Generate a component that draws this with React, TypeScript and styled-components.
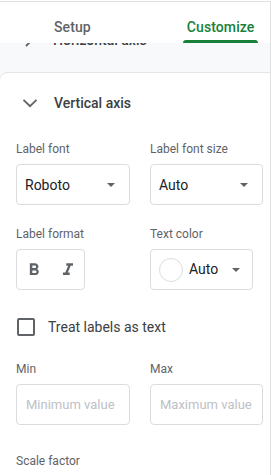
import React from "react";
import styled, { createGlobalStyle } from "styled-components";

const Global = createGlobalStyle`
  html, body { margin: 0; padding: 0; background: #ffffff; }
  body { font-family: Roboto, "Noto Sans", Arial, sans-serif; -webkit-font-smoothing: antialiased; }
  * { box-sizing: border-box; }
`;

const Page = styled.div`
  width: 271px;
  height: 475px;
  overflow: hidden;
  margin-top: 1px;
  border-top: 1px solid #e0e0e0;
  border-right: 1px solid #e0e0e0;
  background: #ffffff;
  display: flex;
  flex-direction: column;
`;

const TabBar = styled.div`
  display: flex;
  align-items: flex-end;
  height: 41px;
  padding-left: 50px;
  gap: 88px;
  background: #ffffff;
  position: relative;
  z-index: 1;
`;

const Tab = styled.div<{ $active?: boolean }>`
  position: relative;
  padding: 0 4px 6px;
  font-size: 14px;
  line-height: 20px;
  font-weight: 500;
  letter-spacing: 0.1px;
  color: ${(p) => (p.$active ? "#188038" : "#5f6368")};
  &::after {
    content: "";
    position: absolute;
    left: 0;
    right: 0;
    bottom: 0;
    height: 3px;
    border-radius: 3px 3px 0 0;
    background: ${(p) => (p.$active ? "#188038" : "transparent")};
  }
`;

const Scroller = styled.div`
  flex: 1;
  background: #f8f9fa;
  display: flex;
  flex-direction: column;
  overflow: hidden;
`;

const CollapsedPeek = styled.div`
  height: 29px;
  overflow: hidden;
`;

const SectionHeader = styled.div<{ $peek?: boolean }>`
  display: flex;
  align-items: center;
  gap: 16px;
  height: 20px;
  padding-left: ${(p) => (p.$peek ? "21px" : "6px")};
  margin-top: ${(p) => (p.$peek ? "-13px" : "0")};
  font-size: 14px;
  line-height: 20px;
  font-weight: 500;
  color: #3c4043;
`;

const Card = styled.div`
  flex: 1;
  background: #ffffff;
  border-top: 1px solid #e3e5e8;
  border-top-left-radius: 8px;
  box-shadow: -1px 0 0 0 #f1f3f4;
  padding: 20px 8px 0 16px;
  display: flex;
  flex-direction: column;
`;

const Grid = styled.div`
  display: grid;
  grid-template-columns: 114px 113px;
  column-gap: 20px;
`;

const Field = styled.div<{ $top: number }>`
  display: flex;
  flex-direction: column;
  margin-top: ${(p) => p.$top}px;
`;

const Label = styled.div`
  font-size: 12px;
  line-height: 16px;
  color: #5f6368;
  margin-bottom: 7px;
  white-space: nowrap;
`;

const Box = styled.div<{ $w?: number }>`
  height: 41px;
  width: ${(p) => (p.$w ? `${p.$w}px` : "auto")};
  border: 1px solid #dadce0;
  border-radius: 4px;
  background: #ffffff;
  display: flex;
  align-items: center;
`;

const SelectBox = styled(Box)`
  justify-content: space-between;
  padding: 0 14px 0 8px;
  font-size: 14px;
  color: #202124;
`;

const ColorBox = styled(Box)`
  padding: 0 12px 0 8px;
  gap: 6px;
  font-size: 14px;
  color: #202124;
`;

const Swatch = styled.span`
  width: 24px;
  height: 24px;
  border-radius: 50%;
  border: 1px solid #dadce0;
  background: #ffffff;
  flex: none;
`;

const ColorText = styled.span`
  flex: 1;
  margin-top: -1px;
`;

const FormatBox = styled(Box)`
  padding: 1px 0 0 7px;
  gap: 14px;
  color: #5f6368;
`;

const Input = styled.input`
  height: 41px;
  width: 100%;
  border: 1px solid #dadce0;
  border-radius: 4px;
  background: #ffffff;
  padding: 0 6px 0 9px;
  font-family: Roboto, "Noto Sans", Arial, sans-serif;
  font-size: 13px;
  color: #202124;
  outline: none;
  &::placeholder {
    color: #bdc1c6;
  }
`;

const CheckRow = styled.label`
  display: flex;
  align-items: center;
  gap: 13px;
  margin-top: 27px;
  padding-left: 1px;
  font-size: 14px;
  line-height: 20px;
  color: #3c4043;
`;

const CheckSquare = styled.span`
  width: 18px;
  height: 18px;
  border: 2px solid #5f6368;
  border-radius: 2px;
  flex: none;
`;

const Caret = () => (
  <svg width="8" height="4" viewBox="0 0 10 5" style={{ flex: "none" }}>
    <path d="M0 0L5 5L10 0z" fill="#5f6368" />
  </svg>
);

const ChevronDown = () => (
  <svg width="16" height="10" viewBox="0 0 16 10" style={{ flex: "none" }}>
    <path d="M1.5 1.8L8 8.2L14.5 1.8" fill="none" stroke="#5f6368" strokeWidth="1.8" />
  </svg>
);

const ChevronRight = () => (
  <svg width="16" height="16" viewBox="0 0 16 16" style={{ flex: "none" }}>
    <path d="M5 2L11 8L5 14" fill="none" stroke="#5f6368" strokeWidth="1.8" />
  </svg>
);

const BoldIcon = () => (
  <svg width="20" height="20" viewBox="0 0 24 24">
    <path
      fill="#5f6368"
      d="M15.6 10.79c.97-.67 1.65-1.77 1.65-2.79 0-2.26-1.750-4-4-4H7v14h7.04c2.09 0 3.71-1.7 3.71-3.79 0-1.52-.86-2.82-2.150-3.420zM10 6.5h3c.83 0 1.5.67 1.5 1.5s-.67 1.5-1.5 1.5h-3v-3zm3.5 9H10v-3h3.5c.83 0 1.5.67 1.5 1.5s-.67 1.5-1.5 1.5z"
    />
  </svg>
);

const ItalicIcon = () => (
  <svg width="20" height="20" viewBox="0 0 24 24">
    <path fill="#5f6368" d="M10 4v3h2.21l-3.42 8H6v3h8v-3h-2.21l3.42-8H18V4z" />
  </svg>
);

export default function App() {
  return (
    <>
      <Global />
      <Page>
        <TabBar>
          <Tab>Setup</Tab>
          <Tab $active>Customize</Tab>
        </TabBar>
        <Scroller>
          <CollapsedPeek>
            <SectionHeader $peek>
              <ChevronRight />
              Horizontal axis
            </SectionHeader>
          </CollapsedPeek>
          <Card>
            <SectionHeader>
              <ChevronDown />
              Vertical axis
            </SectionHeader>
            <Grid>
              <Field $top={28}>
                <Label>Label font</Label>
                <SelectBox>
                  Roboto
                  <Caret />
                </SelectBox>
              </Field>
              <Field $top={28}>
                <Label>Label font size</Label>
                <SelectBox>
                  Auto
                  <Caret />
                </SelectBox>
              </Field>
              <Field $top={21}>
                <Label>Label format</Label>
                <FormatBox $w={69}>
                  <BoldIcon />
                  <ItalicIcon />
                </FormatBox>
              </Field>
              <Field $top={21}>
                <Label>Text color</Label>
                <ColorBox $w={103}>
                  <Swatch />
                  <ColorText>Auto</ColorText>
                  <Caret />
                </ColorBox>
              </Field>
            </Grid>
            <CheckRow>
              <CheckSquare />
              Treat labels as text
            </CheckRow>
            <Grid>
              <Field $top={24}>
                <Label>Min</Label>
                <Input placeholder="Minimum value" />
              </Field>
              <Field $top={24}>
                <Label>Max</Label>
                <Input placeholder="Maximum value" />
              </Field>
            </Grid>
            <Field $top={28}>
              <Label>Scale factor</Label>
            </Field>
          </Card>
        </Scroller>
      </Page>
    </>
  );
}
